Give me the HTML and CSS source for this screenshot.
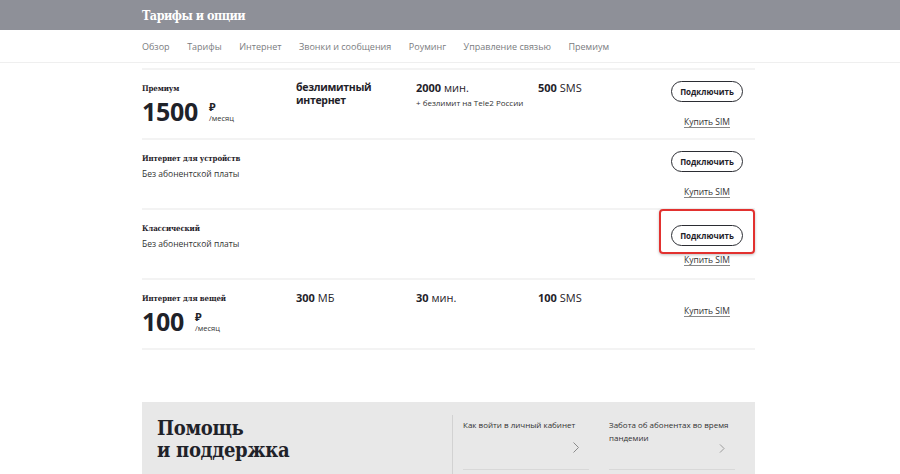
FILE: index.html
```html
<!DOCTYPE html>
<html lang="ru">
<head>
<meta charset="utf-8">
<title>Тарифы и опции</title>
<link rel="stylesheet" href="styles.css">
</head>
<body>
<header class="topbar">
  <div class="wrap"><h1 class="title">Тарифы и опции</h1></div>
</header>
<nav class="subnav">
  <div class="wrap nav-list">
    <a>Обзор</a><a>Тарифы</a><a>Интернет</a><a>Звонки и сообщения</a><a>Роуминг</a><a>Управление связью</a><a>Премиум</a>
  </div>
</nav>
<main class="wrap">
  <section class="tariffs">
    <div class="row">
      <div class="col-name">
        <div class="name">Премиум</div>
        <div class="price"><span class="amount">1500</span><span class="unit"><span class="rub">₽</span><span class="per">/месяц</span></span></div>
      </div>
      <div class="col"><div class="val strong">безлимитный<br>интернет</div></div>
      <div class="col"><div class="val"><b>2000</b> мин.</div><div class="note">+ безлимит на Tele2 России</div></div>
      <div class="col"><div class="val"><b>500</b> SMS</div></div>
      <div class="actions">
        <button class="btn">Подключить</button>
        <a class="buy">Купить SIM</a>
      </div>
    </div>
    <div class="row">
      <div class="col-name">
        <div class="name">Интернет для устройств</div>
        <div class="desc">Без абонентской платы</div>
      </div>
      <div class="col"></div><div class="col"></div><div class="col"></div>
      <div class="actions">
        <button class="btn">Подключить</button>
        <a class="buy">Купить SIM</a>
      </div>
    </div>
    <div class="row">
      <div class="col-name">
        <div class="name">Классический</div>
        <div class="desc">Без абонентской платы</div>
      </div>
      <div class="col"></div><div class="col"></div><div class="col"></div>
      <div class="actions">
        <div class="highlight"><button class="btn">Подключить</button></div>
        <a class="buy">Купить SIM</a>
      </div>
    </div>
    <div class="row">
      <div class="col-name">
        <div class="name">Интернет для вещей</div>
        <div class="price"><span class="amount">100</span><span class="unit"><span class="rub">₽</span><span class="per">/месяц</span></span></div>
      </div>
      <div class="col"><div class="val"><b>300</b> МБ</div></div>
      <div class="col"><div class="val"><b>30</b> мин.</div></div>
      <div class="col"><div class="val"><b>100</b> SMS</div></div>
      <div class="actions only-buy">
        <a class="buy">Купить SIM</a>
      </div>
    </div>
  </section>

  <section class="help">
    <h2 class="help-title">Помощь<br>и поддержка</h2>
    <div class="help-cards">
      <a class="card"><span class="card-text">Как войти в личный кабинет</span><svg class="chev" width="6" height="11" viewBox="0 0 6 11"><polyline points="0.5,0.5 5.5,5.5 0.5,10.5" fill="none" stroke="#8a8a8a" stroke-width="1"/></svg></a>
      <a class="card"><span class="card-text">Забота об абонентах во время пандемии</span><svg class="chev" width="6" height="11" viewBox="0 0 6 11"><polyline points="0.5,0.5 5.5,5.5 0.5,10.5" fill="none" stroke="#8a8a8a" stroke-width="1"/></svg></a>
    </div>
  </section>
</main>
</body>
</html>
```

FILE: styles.css
```css
* { box-sizing: border-box; }
body {
  margin: 0;
  font-family: "Open Sans", "Noto Sans", sans-serif;
  color: #1f2229;
  background: #fff;
}
.wrap {
  width: 613px;
  margin-left: 142px;
}
.topbar {
  background: #8e9098;
  height: 30px;
}
.title {
  margin: 0;
  font-family: "DejaVu Serif", serif;
  font-stretch: condensed;
  font-weight: bold;
  font-size: 12.5px;
  line-height: 31px;
  color: #fff;
  letter-spacing: -0.5px;
}
.subnav {
  height: 33px;
  border-bottom: 1px solid #efefef;
}
.nav-list {
  display: flex;
  gap: 17.5px;
  height: 32px;
  align-items: center;
  width: auto;
}
.nav-list a {
  font-size: 9px;
  color: #7a7c80;
}
.tariffs {
  margin-top: 5px;
  border-top: 2px solid #f3f3f3;
}
.row {
  display: grid;
  grid-template-columns: 154px 120px 122px 1fr 72px;
  padding: 11px 12px 0 0;
  height: 70px;
  border-bottom: 2px solid #f3f3f3;
}
.name {
  font-family: "DejaVu Serif", serif;
  font-stretch: condensed;
  font-weight: bold;
  font-size: 7.8px;
  letter-spacing: -0.1px;
  line-height: 14px;
  margin-top: 1px;
}
.desc {
  font-size: 8.5px;
  color: #333;
  line-height: 14px;
  margin-top: 1px;
}
.price {
  display: flex;
  align-items: flex-start;
}
.amount {
  font-size: 25px;
  font-weight: bold;
  line-height: 30px;
  letter-spacing: -0.3px;
}
.unit {
  display: flex;
  flex-direction: column;
  margin-left: 11px;
  padding-top: 6px;
}
.rub {
  font-size: 11px;
  font-weight: bold;
  line-height: 10px;
}
.per {
  font-size: 7.5px;
  line-height: 10px;
  margin-top: 1px;
  color: #333;
}
.val {
  font-size: 11px;
  line-height: 13px;
}
.val.strong {
  font-size: 10.5px;
  font-weight: bold;
  letter-spacing: -0.3px;
}
.val b { font-weight: bold; }
.note {
  font-size: 8px;
  color: #333;
  margin-top: 3px;
}
.actions {
  display: flex;
  flex-direction: column;
  align-items: center;
}
.btn {
  width: 72px;
  height: 21px;
  border: 1.5px solid #2b2d33;
  border-radius: 11px;
  background: #fff;
  font-family: "Open Sans", sans-serif;
  font-weight: bold;
  font-size: 8px;
  color: #1f2229;
  padding: 0;
}
.buy {
  margin-top: 14px;
  font-size: 8.5px;
  color: #333;
  text-decoration: underline;
  text-decoration-color: #888;
  text-underline-offset: 2px;
}
.only-buy { padding-top: 14px; }
.only-buy .buy { margin-top: 0; }
.highlight {
  padding: 11px 10px 6px;
  margin: -12px -11px -7px;
  border: 2px solid #e2312f;
  border-radius: 4px;
  box-shadow: 0 1px 3px rgba(0,0,0,0.25);
}
.highlight + .buy { margin-top: 7px; }
.help {
  margin-top: 52px;
  background: #e8e8e8;
  display: flex;
  height: 80px;
  padding-top: 13px;
}
.help-title {
  margin: 0 0 0 15px;
  width: 295px;
  font-family: "DejaVu Serif", serif;
  font-stretch: condensed;
  font-weight: bold;
  font-size: 20px;
  line-height: 22px;
  letter-spacing: -0.3px;
  color: #1f2229;
  padding-top: 2px;
}
.help-cards {
  display: flex;
  align-items: flex-start;
  gap: 20px;
  border-left: 1px solid #d2d2d2;
  padding-left: 10px;
  height: 67px;
}
.card {
  width: 126px;
  height: 55px;
  display: flex;
  flex-direction: column;
  border-bottom: 1px solid #d8d8d8;
  padding-top: 3px;
}
.card-text {
  font-size: 8px;
  line-height: 13px;
  color: #333;
}
.chev {
  align-self: flex-end;
  margin-top: auto;
  margin-right: 10px;
  margin-bottom: 16px;
}
```
